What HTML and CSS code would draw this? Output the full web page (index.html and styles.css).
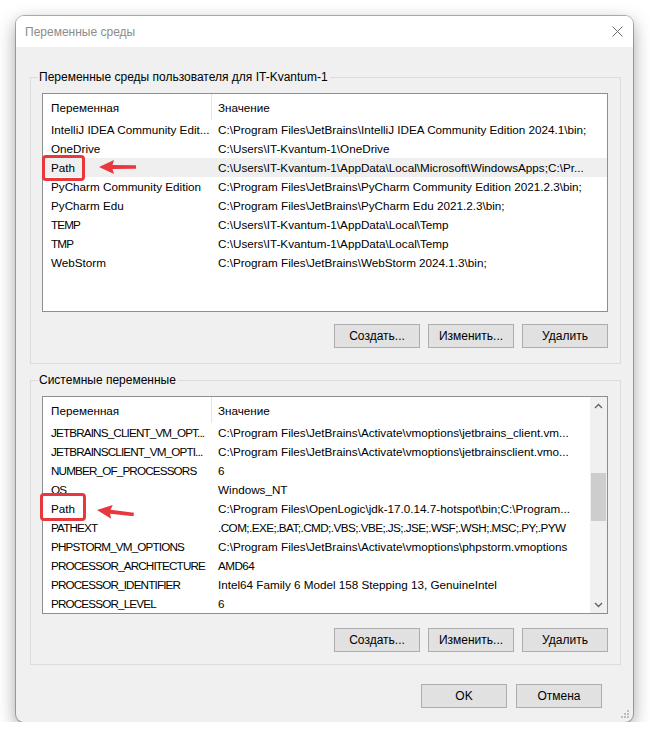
FILE: index.html
```
<!DOCTYPE html>
<html lang="ru">
<head>
<meta charset="utf-8">
<title>Переменные среды</title>
<link rel="stylesheet" href="styles.css">
</head>
<body>
<div class="window">
  <div class="titlebar">
    <span class="title">Переменные среды</span>
    <svg class="close" width="11" height="11" viewBox="0 0 11 11"><path d="M0.5 0.5 L10.5 10.5 M10.5 0.5 L0.5 10.5" stroke="#6b6b6b" stroke-width="1" fill="none"/></svg>
  </div>
  <div class="body">
    <div class="group group-user">
      <div class="group-label">Переменные среды пользователя для IT-Kvantum-1</div>
      <div class="list list-user">
        <div class="list-main">
          <div class="row head"><span class="c1">Переменная</span><span class="c2">Значение</span></div>
          <div class="row"><span class="c1">IntelliJ IDEA Community Edit...</span><span class="c2">C:\Program Files\JetBrains\IntelliJ IDEA Community Edition 2024.1\bin;</span></div>
          <div class="row"><span class="c1">OneDrive</span><span class="c2">C:\Users\IT-Kvantum-1\OneDrive</span></div>
          <div class="row sel"><span class="c1">Path</span><span class="c2">C:\Users\IT-Kvantum-1\AppData\Local\Microsoft\WindowsApps;C:\Pr...</span></div>
          <div class="row"><span class="c1">PyCharm Community Edition</span><span class="c2">C:\Program Files\JetBrains\PyCharm Community Edition 2021.2.3\bin;</span></div>
          <div class="row"><span class="c1">PyCharm Edu</span><span class="c2">C:\Program Files\JetBrains\PyCharm Edu 2021.2.3\bin;</span></div>
          <div class="row"><span class="c1 u">TEMP</span><span class="c2">C:\Users\IT-Kvantum-1\AppData\Local\Temp</span></div>
          <div class="row"><span class="c1 u">TMP</span><span class="c2">C:\Users\IT-Kvantum-1\AppData\Local\Temp</span></div>
          <div class="row"><span class="c1">WebStorm</span><span class="c2">C:\Program Files\JetBrains\WebStorm 2024.1.3\bin;</span></div>
        </div>
        <div class="mark mark-user"></div>
        <svg class="arrow arrow-user" width="38" height="16" viewBox="0 0 38 16"><path d="M0 8 L15 1 L13.5 6 L37 6.2 L37 9.8 L13.5 10 L15 15 Z" fill="#e8383e"/></svg>
      </div>
      <div class="buttons">
        <div class="btn">Создать...</div>
        <div class="btn">Изменить...</div>
        <div class="btn">Удалить</div>
      </div>
    </div>

    <div class="group group-sys">
      <div class="group-label">Системные переменные</div>
      <div class="list list-sys">
        <div class="list-main">
          <div class="row head"><span class="c1">Переменная</span><span class="c2">Значение</span></div>
          <div class="row"><span class="c1 u">JETBRAINS_CLIENT_VM_OPT...</span><span class="c2">C:\Program Files\JetBrains\Activate\vmoptions\jetbrains_client.vm...</span></div>
          <div class="row"><span class="c1 u">JETBRAINSCLIENT_VM_OPTI...</span><span class="c2">C:\Program Files\JetBrains\Activate\vmoptions\jetbrainsclient.vmo...</span></div>
          <div class="row"><span class="c1 u">NUMBER_OF_PROCESSORS</span><span class="c2">6</span></div>
          <div class="row"><span class="c1 u">OS</span><span class="c2">Windows_NT</span></div>
          <div class="row"><span class="c1">Path</span><span class="c2">C:\Program Files\OpenLogic\jdk-17.0.14.7-hotspot\bin;C:\Program...</span></div>
          <div class="row"><span class="c1 u">PATHEXT</span><span class="c2 u2">.COM;.EXE;.BAT;.CMD;.VBS;.VBE;.JS;.JSE;.WSF;.WSH;.MSC;.PY;.PYW</span></div>
          <div class="row"><span class="c1 u">PHPSTORM_VM_OPTIONS</span><span class="c2">C:\Program Files\JetBrains\Activate\vmoptions\phpstorm.vmoptions</span></div>
          <div class="row"><span class="c1 u">PROCESSOR_ARCHITECTURE</span><span class="c2 u2">AMD64</span></div>
          <div class="row"><span class="c1 u">PROCESSOR_IDENTIFIER</span><span class="c2">Intel64 Family 6 Model 158 Stepping 13, GenuineIntel</span></div>
          <div class="row"><span class="c1 u">PROCESSOR_LEVEL</span><span class="c2">6</span></div>
        </div>
        <div class="scrollbar">
          <div class="sb-btn"><svg width="9" height="6" viewBox="0 0 9 6"><path d="M1 5 L4.5 1.5 L8 5" stroke="#606060" stroke-width="1.3" fill="none"/></svg></div>
          <div class="sb-track"><div class="sb-thumb"></div></div>
          <div class="sb-btn"><svg width="9" height="6" viewBox="0 0 9 6"><path d="M1 1 L4.5 4.5 L8 1" stroke="#606060" stroke-width="1.3" fill="none"/></svg></div>
        </div>
        <div class="mark mark-sys"></div>
        <svg class="arrow arrow-sys" width="38" height="16" viewBox="0 0 38 16"><path d="M0 8 L15 1 L13.5 6 L37 6.2 L37 9.8 L13.5 10 L15 15 Z" fill="#e8383e"/></svg>
      </div>
      <div class="buttons">
        <div class="btn">Создать...</div>
        <div class="btn">Изменить...</div>
        <div class="btn">Удалить</div>
      </div>
    </div>

    <div class="footer">
      <div class="btn">OK</div>
      <div class="btn">Отмена</div>
    </div>
  </div>
  <svg class="grip" width="9" height="9" viewBox="0 0 9 9" fill="#bdbdbd">
    <rect x="6" y="0" width="2" height="2"/>
    <rect x="3" y="3" width="2" height="2"/><rect x="6" y="3" width="2" height="2"/>
    <rect x="0" y="6" width="2" height="2"/><rect x="3" y="6" width="2" height="2"/><rect x="6" y="6" width="2" height="2"/>
  </svg>
</div>
</body>
</html>
```
FILE: styles.css
```
html, body {
  margin: 0;
  padding: 0;
}
body {
  background: #ffffff;
  font-family: "Liberation Sans", Arial, sans-serif;
  font-size: 11.7px;
  color: #000;
}
.window {
  position: relative;
  margin: 16px 0 0 16px;
  width: 617px;
  background: #f0f0f0;
  border-radius: 8px;
  overflow: hidden;
  box-shadow: 0 0 0 1px rgba(0, 0, 0, 0.28), 0 6px 18px rgba(0, 0, 0, 0.38);
}
.titlebar {
  height: 31px;
  background: #ffffff;
  display: flex;
  align-items: center;
  justify-content: space-between;
  padding: 0 10px 0 9px;
}
.title {
  color: #8c8c8c;
  font-size: 12px;
}
.close {
  display: block;
}
.body {
  display: flex;
  flex-direction: column;
  padding: 0 12px 14px 14px;
}
.group {
  border: 1px solid #dcdcdc;
  padding: 0 12px 0 11px;
}
.group-user {
  margin-top: 30px;
  padding-bottom: 15px;
}
.group-sys {
  margin-top: 16px;
  padding-bottom: 12px;
}
.group-label {
  width: max-content;
  margin: -9px 0 0 -4px;
  padding: 0 2px 0 1px;
  line-height: 16px;
  background: #f0f0f0;
  font-size: 12px;
}
.list {
  position: relative;
  margin-top: 8px;
  background: #ffffff;
  border: 1px solid #8e8e8e;
  box-sizing: border-box;
  display: flex;
}
.list-user {
  height: 219px;
}
.list-sys {
  height: 218px;
}
.list-main {
  flex: 1;
  min-width: 0;
  overflow: hidden;
}
.row {
  display: grid;
  grid-template-columns: 169px 1fr;
  height: 19px;
  align-items: center;
  white-space: nowrap;
}
.row.head {
  height: 26px;
  align-items: stretch;
}
.c1 {
  padding-left: 8px;
  overflow: hidden;
}
.c2 {
  padding-left: 6px;
  overflow: hidden;
}
.u {
  letter-spacing: -0.85px;
}
.u2 {
  letter-spacing: -0.55px;
}
.head .c1,
.head .c2 {
  display: flex;
  align-items: center;
}
.head .c1 {
  border-right: 1px solid #e5e5e5;
}
.row.sel {
  background: #efefef;
}
.buttons {
  display: flex;
  justify-content: flex-end;
  gap: 8px;
}
.group-user .buttons {
  margin-top: 12px;
}
.group-sys .buttons {
  margin-top: 14px;
}
.btn {
  width: 86px;
  height: 24px;
  box-sizing: border-box;
  border: 1px solid #adadad;
  background: #e1e1e1;
  display: flex;
  align-items: center;
  justify-content: center;
  font-size: 12px;
}
.footer {
  display: flex;
  justify-content: flex-end;
  gap: 9px;
  margin-top: 19px;
  padding-right: 19px;
}
.scrollbar {
  width: 17px;
  flex: none;
  background: #f0f0f0;
  display: flex;
  flex-direction: column;
}
.sb-btn {
  height: 17px;
  display: flex;
  align-items: center;
  justify-content: center;
}
.sb-btn svg {
  display: block;
}
.sb-track {
  flex: 1;
  display: flex;
  flex-direction: column;
  align-items: center;
}
.sb-thumb {
  margin-top: 59px;
  width: 15px;
  height: 48px;
  background: #cdcdcd;
}
.mark {
  position: absolute;
  box-sizing: border-box;
  border: 3px solid #e8383e;
  border-radius: 4px;
}
.mark-user {
  left: -1px;
  top: 61px;
  width: 43px;
  height: 26px;
}
.mark-sys {
  left: -3px;
  top: 96px;
  width: 46px;
  height: 28px;
}
.arrow {
  position: absolute;
  display: block;
}
.arrow-user {
  left: 56px;
  top: 65px;
}
.arrow-sys {
  left: 54px;
  top: 105px;
  transform: rotate(7deg);
  transform-origin: 0 50%;
}
.grip {
  position: absolute;
  right: 3px;
  bottom: 3px;
  display: block;
}
```
